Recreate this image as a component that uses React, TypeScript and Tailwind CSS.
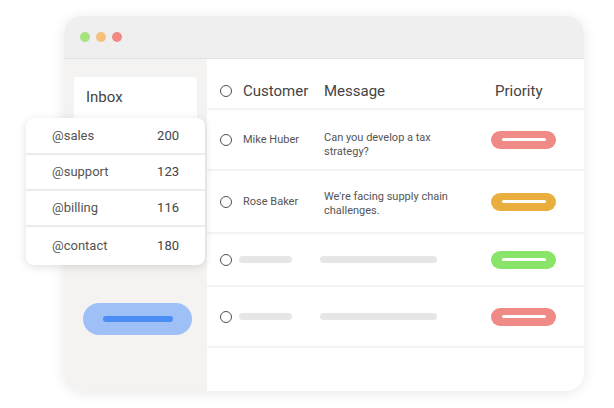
import React from "react";

function Circle() {
  return <div className="w-[12px] h-[12px] rounded-full border-[1.5px] border-[#505050] shrink-0" />;
}

function Pill({ color }: { color: string }) {
  return (
    <div className={`w-[65px] h-[18px] rounded-full flex items-center justify-center ${color}`}>
      <div className="w-[44px] h-[3px] rounded-full bg-white" />
    </div>
  );
}

export default function App() {
  const inbox = [
    ["@sales", "200"],
    ["@support", "123"],
    ["@billing", "116"],
    ["@contact", "180"],
  ];
  return (
    <div className="relative w-[614px] h-[408px] bg-white pl-[64px] pt-[16px]" style={{ fontFamily: "Roboto, 'Liberation Sans', sans-serif" }}>
      <div className="w-[520px] h-[375px] rounded-[18px] overflow-hidden bg-white flex flex-col shadow-[0_2px_14px_rgba(0,0,0,0.09)]">
        <div className="h-[43px] shrink-0 bg-[#efefef] border-b border-[#e2e2e2] flex items-center gap-[6px] pl-[16px]">
          <div className="w-[10px] h-[10px] rounded-full bg-[#a6e27e]" />
          <div className="w-[10px] h-[10px] rounded-full bg-[#f7c07c]" />
          <div className="w-[10px] h-[10px] rounded-full bg-[#f08884]" />
        </div>
        <div className="flex flex-1">
          <div className="w-[143px] shrink-0 bg-[#f4f3f2] pt-[18px] pl-[10px]">
            <div className="w-[123px] h-[80px] bg-white rounded-t-[3px] pt-[10px] pl-[12px] text-[15px] leading-[20px] text-[#444]">
              Inbox
            </div>
            <div className="mt-[146px] ml-[9px] w-[109px] h-[32px] rounded-full bg-[#9fc0f7] flex items-center justify-center">
              <div className="w-[70px] h-[6px] rounded-full bg-[#4a8ef5]" />
            </div>
          </div>
          <div className="flex-1 flex flex-col">
            <div className="h-[51px] flex items-center pt-[14px] pl-[13px] border-b-2 border-[#f3f3f3] text-[15px] leading-[20px] text-[#444]">
              <Circle />
              <div className="ml-[11px] w-[81px]">Customer</div>
              <div className="w-[167px]">Message</div>
              <div className="pl-[4px]">Priority</div>
            </div>
            <div className="h-[61px] flex items-center pl-[13px] border-b-2 border-[#f3f3f3] text-[11px] leading-[14px] text-[#555]">
              <Circle />
              <div className="ml-[11px] w-[81px]">Mike Huber</div>
              <div className="w-[167px] mt-[10px]"><div className="w-[132px]">Can you develop a tax strategy?</div></div>
              <Pill color="bg-[#f08a86]" />
            </div>
            <div className="h-[63px] flex items-center pl-[13px] border-b-2 border-[#f3f3f3] text-[11px] leading-[14px] text-[#555]">
              <Circle />
              <div className="ml-[11px] w-[81px]">Rose Baker</div>
              <div className="w-[167px] mt-[4px]"><div className="w-[132px]">We're facing supply chain challenges.</div></div>
              <Pill color="bg-[#e9ae3e]" />
            </div>
            <div className="h-[53px] flex items-center pl-[13px] border-b-2 border-[#f3f3f3]">
              <Circle />
              <div className="ml-[7px] w-[53px] h-[7px] rounded-full bg-[#e6e6e6]" />
              <div className="ml-[28px] w-[117px] h-[7px] rounded-full bg-[#e6e6e6]" />
              <div className="ml-[54px]"><Pill color="bg-[#89e569]" /></div>
            </div>
            <div className="h-[61px] flex items-center pl-[13px] border-b-2 border-[#f3f3f3]">
              <Circle />
              <div className="ml-[7px] w-[53px] h-[7px] rounded-full bg-[#e6e6e6]" />
              <div className="ml-[28px] w-[117px] h-[7px] rounded-full bg-[#e6e6e6]" />
              <div className="ml-[54px]"><Pill color="bg-[#f08a86]" /></div>
            </div>
          </div>
        </div>
      </div>
      <div className="absolute left-[26px] top-[118px] w-[179px] pt-[1px] bg-white rounded-[8px] shadow-[0_2px_10px_rgba(0,0,0,0.13)] flex flex-col">
        {inbox.map(([name, n], i) => (
          <div key={name} className={`flex items-center justify-between px-[26px] text-[13px] text-[#555] ${i < 3 ? "h-[36px] border-b-2 border-[#ececec]" : "h-[38px]"}`}>
            <span>{name}</span>
            <span className="text-[#444]">{n}</span>
          </div>
        ))}
      </div>
    </div>
  );
}
